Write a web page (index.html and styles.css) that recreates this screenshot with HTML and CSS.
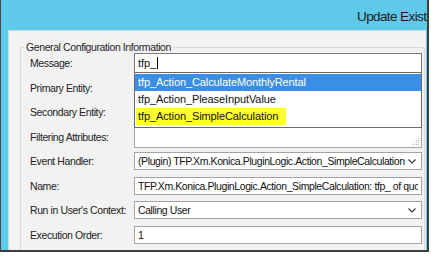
FILE: index.html
```html
<!DOCTYPE html>
<html lang="en">
<head>
  <meta charset="UTF-8" />
  <title>Update Existing Step</title>
  <link rel="stylesheet" href="styles.css">
</head>
<body>

  <div class="window">
    <div class="titlebar"><span class="title">Update Existing Step</span></div>
    <div class="client">
      <fieldset class="group">
        <legend>General Configuration Information</legend>
        <div class="form">
          <label class="lbl">Message:</label>
          <div class="cell msg">
            <div class="field focus">tfp_<span class="caret"></span></div>
            <ul class="suggest">
              <li class="sel">tfp_Action_CalculateMonthlyRental</li>
              <li>tfp_Action_PleaseInputValue</li>
              <li><mark>tfp_Action_SimpleCalculation</mark></li>
            </ul>
          </div>

          <label class="lbl">Primary Entity:</label>
          <div class="cell"><div class="field"></div></div>

          <label class="lbl">Secondary Entity:</label>
          <div class="cell"><div class="field"></div></div>

          <label class="lbl">Filtering Attributes:</label>
          <div class="cell">
            <div class="field area">
              <svg class="grip" width="9" height="9" viewBox="0 0 9 9">
                <rect x="7" y="1" width="1" height="1" />
                <rect x="5" y="3" width="1" height="1" />
                <rect x="7" y="3" width="1" height="1" />
                <rect x="3" y="5" width="1" height="1" />
                <rect x="5" y="5" width="1" height="1" />
                <rect x="7" y="5" width="1" height="1" />
                <rect x="1" y="7" width="1" height="1" />
                <rect x="3" y="7" width="1" height="1" />
                <rect x="5" y="7" width="1" height="1" />
                <rect x="7" y="7" width="1" height="1" />
              </svg>
            </div>
          </div>

          <label class="lbl">Event Handler:</label>
          <div class="cell">
            <div class="field combo">
              <span class="val">(Plugin) TFP.Xm.Konica.PluginLogic.Action_SimpleCalculation</span>
              <svg class="chev" width="8" height="5" viewBox="0 0 8 5"><polyline points="0.5,0.5 4,4 7.5,0.5" /></svg>
            </div>
          </div>

          <label class="lbl">Name:</label>
          <div class="cell">
            <div class="field"><span class="val">TFP.Xm.Konica.PluginLogic.Action_SimpleCalculation: tfp_ of quote</span></div>
          </div>

          <label class="lbl">Run in User's Context:</label>
          <div class="cell">
            <div class="field combo">
              <span class="val">Calling User</span>
              <svg class="chev" width="8" height="5" viewBox="0 0 8 5"><polyline points="0.5,0.5 4,4 7.5,0.5" /></svg>
            </div>
          </div>

          <label class="lbl">Execution Order:</label>
          <div class="cell">
            <div class="field"><span class="val">1</span></div>
          </div>
        </div>
      </fieldset>
    </div>
  </div>

</body>
</html>
```

FILE: styles.css
```css
:root {
  --frame: #5fc9ea;
  --client-bg: #f2f2f2;
  --field-border: #a3a3a3;
  --select: #3a8ee6;
}
* {
  margin: 0;
  padding: 0;
  box-sizing: border-box;
}
html, body {
  background: #fff;
  font-family: "Liberation Sans", Arial, sans-serif;
  color: #1e1e1e;
}
.window {
  width: 429px;
  height: 252px;
  display: flex;
  flex-direction: column;
  background: var(--frame);
  border-left: 1px solid #4a4a4a;
  border-right: 2px solid #3e3e3e;
  border-bottom: 2px solid #3e3e3e;
  overflow: hidden;
}
.titlebar {
  height: 30px;
  flex: none;
  display: flex;
  align-items: center;
  padding-left: 356px;
  overflow: hidden;
  white-space: nowrap;
}
.title {
  font-size: 13.5px;
  letter-spacing: -0.6px;
  color: #1c1c1c;
  padding-top: 2px;
}
.client {
  flex: 1;
  margin: 0 1px 0 7px;
  background: var(--client-bg);
  border-left: 1px solid #d6d6d6;
  border-top: 1px solid #d6d6d6;
  padding: 10px 1px 0 11px;
  overflow: hidden;
  min-height: 0;
}
.group {
  border: 1px solid #d3d9dd;
  border-radius: 3px;
  padding: 0 2px 20px 3px;
  min-width: 0;
}
.group legend {
  font-size: 10.5px;
  letter-spacing: -0.4px;
  line-height: 12px;
  padding: 0 2px;
  color: #1e1e1e;
}
.form {
  display: grid;
  grid-template-columns: 104px 1fr;
  grid-auto-rows: 24.5px;
  align-items: center;
  padding-left: 6px;
  margin-top: -2px;
}
.lbl {
  font-size: 10.5px;
  letter-spacing: -0.4px;
  white-space: nowrap;
  color: #222;
}
.cell {
  position: relative;
  min-width: 0;
}
.field {
  height: 18px;
  background: #fff;
  border: 1px solid var(--field-border);
  display: flex;
  align-items: center;
  padding: 0 3px;
  overflow: hidden;
  white-space: nowrap;
  font-size: 10.5px;
  letter-spacing: -0.4px;
  color: #111;
}
.field .val {
  flex: 1;
  overflow: hidden;
}
.focus {
  height: 20px;
  border-color: #7a7a7a;
  font-size: 11px;
  letter-spacing: -0.1px;
}
.caret {
  display: inline-block;
  width: 1px;
  height: 12px;
  background: #000;
  margin-left: 1px;
}
.area {
  height: 22px;
  position: relative;
}
.grip {
  position: absolute;
  right: 1px;
  bottom: 1px;
  fill: #b4b4b4;
}
.combo {
  padding-right: 5px;
}
.chev {
  flex: none;
  fill: none;
  stroke: #3a3a3a;
  stroke-width: 1.2;
}
.suggest {
  list-style: none;
  position: absolute;
  top: 100%;
  left: 0;
  right: 0;
  margin-top: -1px;
  background: #fff;
  border: 1px solid #6a6a6a;
  padding: 1px 0 2px;
  z-index: 5;
}
.suggest li {
  height: 17px;
  line-height: 17px;
  padding-left: 3px;
  font-size: 11px;
  letter-spacing: -0.1px;
  color: #111;
  white-space: nowrap;
}
.suggest li.sel {
  background: var(--select);
  color: #fff;
}
.suggest mark {
  display: inline-block;
  background: #ffff30;
  color: #111;
  margin-left: -2px;
  padding: 0 8px 0 2px;
  line-height: 17px;
}
```
